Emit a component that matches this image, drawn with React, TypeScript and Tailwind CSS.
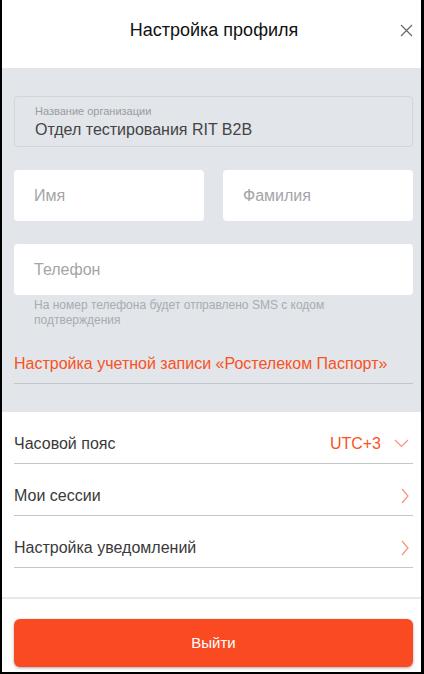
import React from "react";

const ChevronRight = () => (
    <svg width="8" height="16" viewBox="0 0 8 16" fill="none">
        <path d="M1 1l6 7-6 7" stroke="#f7937a" strokeWidth="1.2" />
    </svg>
);

const ChevronDown = () => (
    <svg width="15" height="9" viewBox="0 0 15 9" fill="none">
        <path d="M1 1l6.5 6.5 6.5-6.5" stroke="#f7937a" strokeWidth="1.2" />
    </svg>
);

const Row = ({ label, right }: { label: string; right: React.ReactNode }) => (
    <div className="h-[52px] flex items-center justify-between border-b border-[#c4c6c9] pt-[12px] pr-[4px]">
        <span className="text-[16px] text-[#3a3a3a]">{label}</span>
        {right}
    </div>
);

const App = () => {
    return (
        <div
            className="w-[424px] h-[674px] flex flex-col bg-white border-l-2 border-r-[3px] border-b-2 border-black overflow-hidden"
            style={{ fontFamily: '"Liberation Sans", Arial, sans-serif' }}
        >
            {/* header */}
            <div className="h-[68px] shrink-0 relative flex items-center justify-center pl-[5px]">
                <h1 className="text-[18px] text-[#111] -mt-[8px]">Настройка профиля</h1>
                <svg
                    className="absolute right-[8px] top-[24px]"
                    width="13"
                    height="13"
                    viewBox="0 0 13 13"
                    fill="none"
                >
                    <path d="M1 1l11 11M12 1L1 12" stroke="#666" strokeWidth="1.2" />
                </svg>
            </div>

            {/* gray form */}
            <div className="bg-[#e2e5e9] pl-3 pr-2 pt-7 pb-7 flex flex-col">
                <div className="h-[51px] rounded border border-[#d2d5d9] bg-[#e2e5e9] px-5 pt-[7px]">
                    <div className="text-[11px] text-[#9a9ca0] leading-[14px]">Название организации</div>
                    <div className="text-[16px] text-[#444] leading-[22px] mt-[1px]">
                        Отдел тестирования RIT B2B
                    </div>
                </div>
                <div className="grid grid-cols-2 gap-[19px] mt-[23px]">
                    <div className="h-[51px] rounded bg-white flex items-center px-5 text-[16px] text-[#a3a5a8]">
                        Имя
                    </div>
                    <div className="h-[51px] rounded bg-white flex items-center px-5 text-[16px] text-[#a3a5a8]">
                        Фамилия
                    </div>
                </div>
                <div className="h-[51px] rounded bg-white flex items-center px-5 text-[16px] text-[#a3a5a8] mt-[23px]">
                    Телефон
                </div>
                <p className="text-[12px] leading-[15px] text-[#a9acb0] px-5 mt-[3px] pr-10">
                    На номер телефона будет отправлено SMS с кодом подтверждения
                </p>
                <div className="text-[16px] text-[#f95223] mt-[24px] pb-[7px] border-b border-[#c2c5c9]">
                    Настройка учетной записи «Ростелеком Паспорт»
                </div>
            </div>

            {/* settings list */}
            <div className="pl-3 pr-2">
                <Row
                    label="Часовой пояс"
                    right={
                        <div className="flex items-center gap-[13px]">
                            <span className="text-[16px] text-[#f95223]">UTC+3</span>
                            <ChevronDown />
                        </div>
                    }
                />
                <Row label="Мои сессии" right={<ChevronRight />} />
                <Row label="Настройка уведомлений" right={<ChevronRight />} />
            </div>

            <div className="mt-auto border-t-2 border-[#e8e8e8] pl-3 pr-2 pt-5 pb-[5px]">
                <button className="w-full h-[48px] rounded-md bg-[#fa4a21] text-white text-[15px] shadow-[0_1px_3px_rgba(0,0,0,0.35)]">
                    Выйти
                </button>
            </div>
        </div>
    );
};

export default App;
